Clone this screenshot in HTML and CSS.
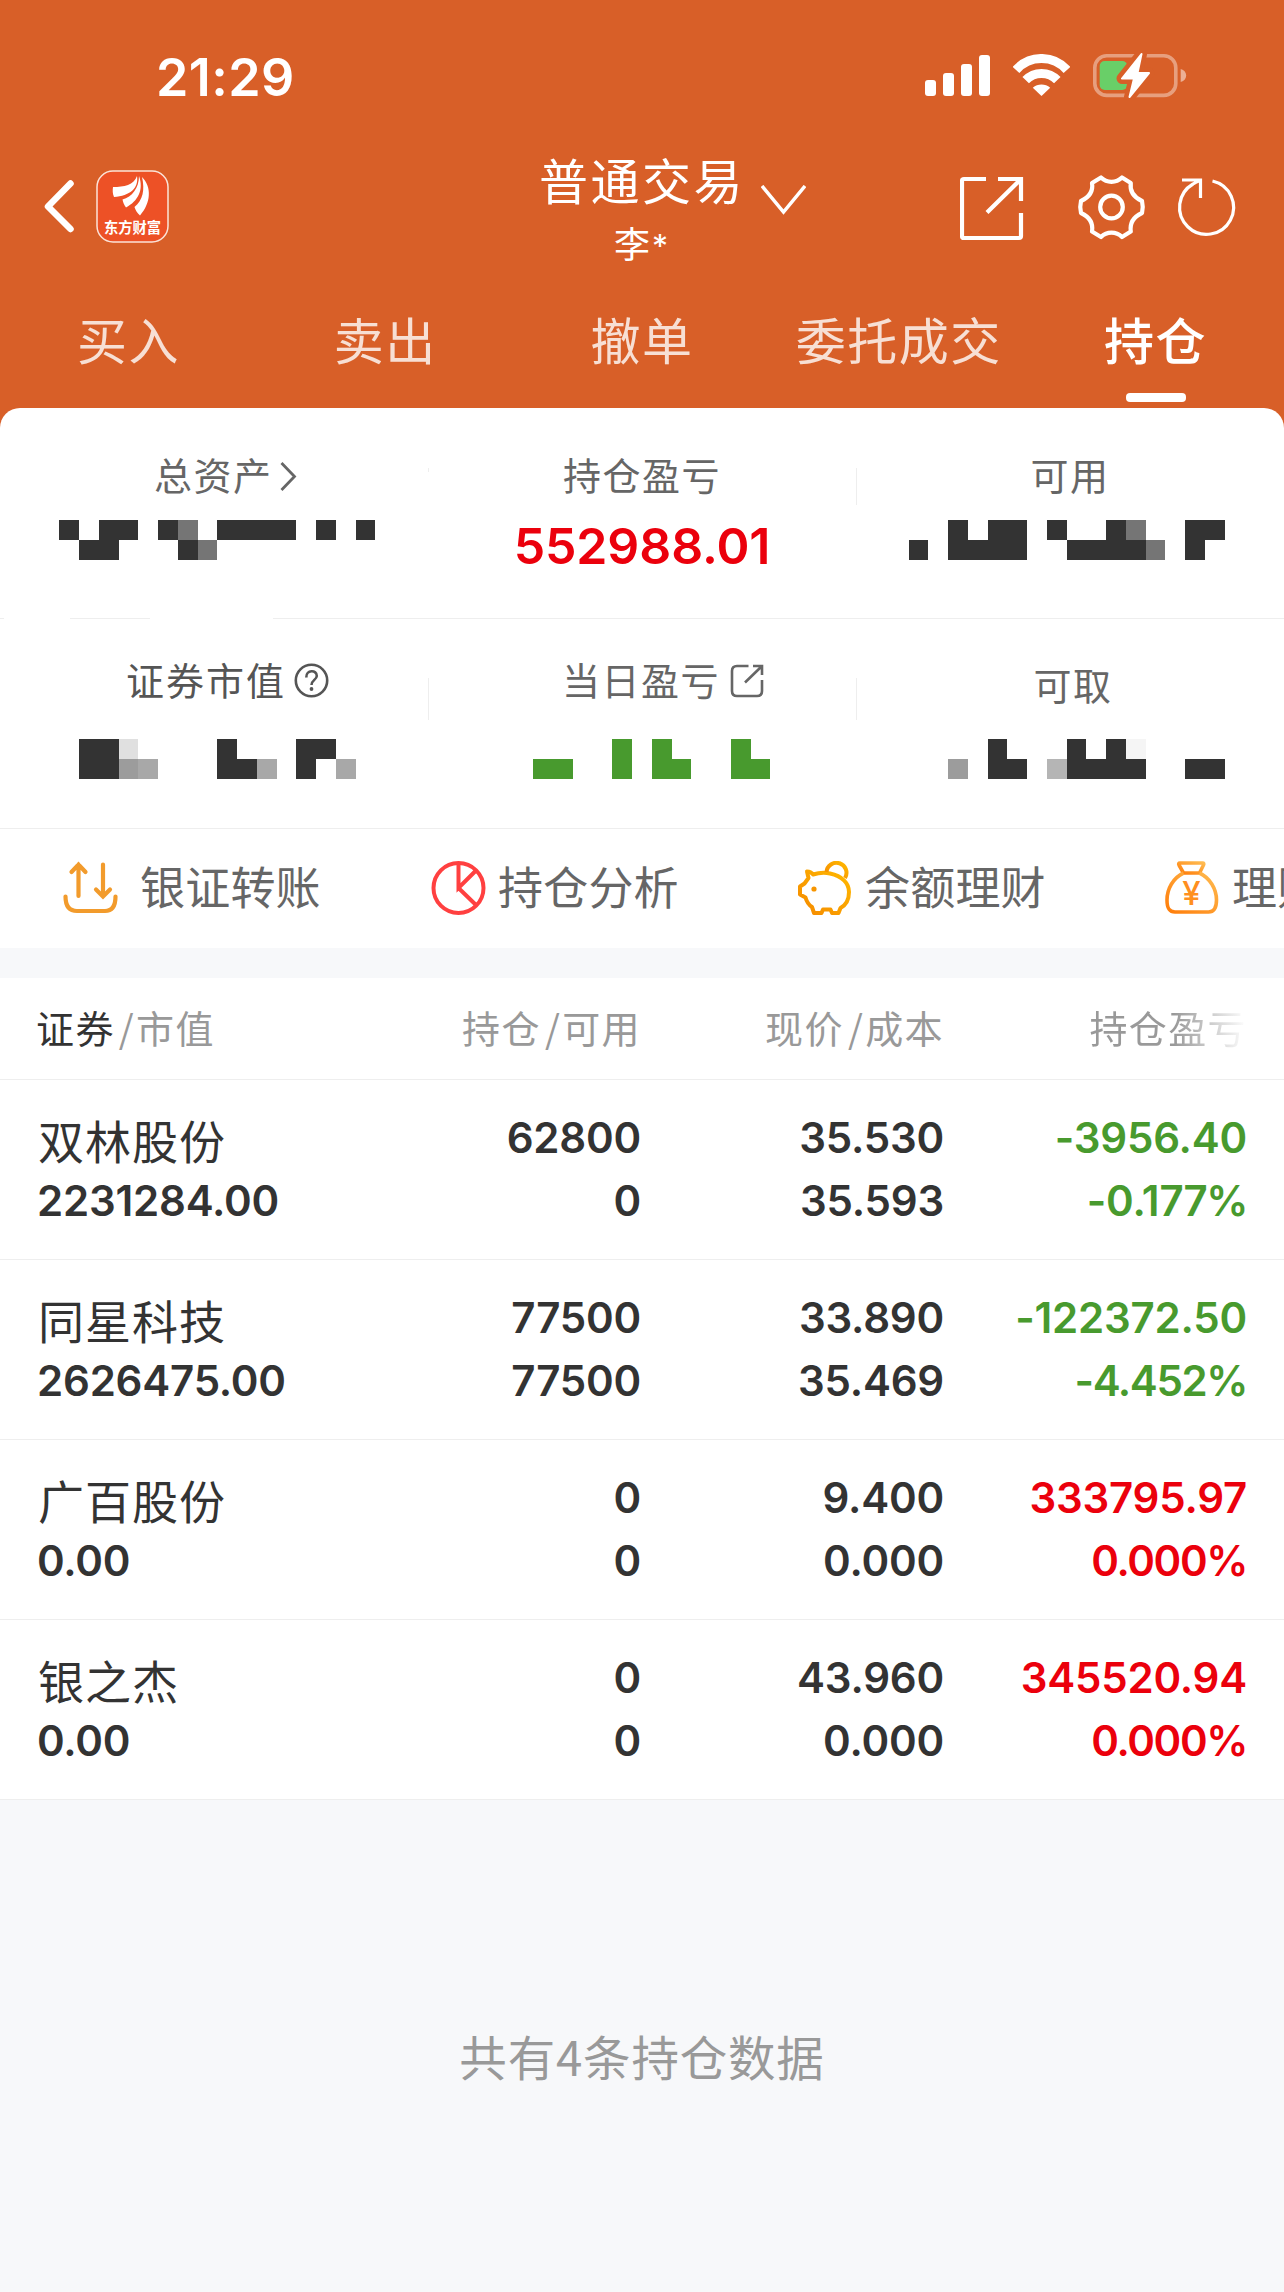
FILE: index.html
```html
<!DOCTYPE html>
<html lang="zh-CN">
<head>
    <meta charset="UTF-8">
    <meta name="viewport" content="width=device-width, initial-scale=1.0">
    <title>普通交易</title>
    <link rel="stylesheet" href="styles.css">
</head>
<body>
    <header class="header">
        <div class="status">
            <span class="time">21:29</span>
            <svg class="signal" width="65" height="42" viewBox="0 0 65 42" fill="#fff">
                <rect x="0" y="26" width="11" height="16" rx="3"/>
                <rect x="18" y="19" width="11" height="23" rx="3"/>
                <rect x="36" y="10" width="11" height="32" rx="3"/>
                <rect x="54" y="1" width="11" height="41" rx="3"/>
            </svg>
            <svg class="wifi" width="57" height="42" viewBox="0 0 57 42">
                <path d="M3 16A34 34 0 0 1 54 16M12.7 26.2A21.8 21.8 0 0 1 44.3 26.2" fill="none" stroke="#fff" stroke-width="9"/>
                <path d="M28.5 42L19.8 33.8A13.5 13.5 0 0 1 37.2 33.8Z" fill="#fff"/>
            </svg>
            <svg class="battery" width="94" height="46" viewBox="0 -1 94 46">
                <rect x="1.8" y="1.8" width="81" height="39.6" rx="12" fill="none" stroke="#fff" stroke-opacity=".4" stroke-width="3.6"/>
                <path d="M87.7 15C95 17 95 26 87.7 28Z" fill="#fff" fill-opacity=".5"/>
                <rect x="6.7" y="7" width="27.6" height="29" rx="5" fill="#69cf68"/>
                <path d="M48.5 0L29 24.5H41L36.5 43L56 19H44.5Z" fill="#d85f28" stroke="#d85f28" stroke-width="11" stroke-linejoin="round"/>
                <path d="M48.5 0L29 24.5H41L36.5 43L56 19H44.5Z" fill="#fff" stroke="#fff" stroke-width="2" stroke-linejoin="round"/>
            </svg>
        </div>

        <div class="navbar">
            <div class="nav-left">
                <svg width="30" height="54" viewBox="0 0 30 54" fill="none" stroke="#fff" stroke-width="6.5" stroke-linecap="round" stroke-linejoin="round">
                    <path d="M26.5 4.5L4 27.5L26.5 50"/>
                </svg>
                <svg class="logo" width="73" height="73" viewBox="0 0 73 73">
                    <rect x="1" y="1" width="71" height="71" rx="16" fill="#ed5126" stroke="#fbe3d8" stroke-width="1.5"/>
                    <path fill="#fff" d="M17 17C28 17 38 15 41 6C43 18 34 26 18 27C16.5 24 16.5 20 17 17Z"/>
                    <path fill="#fff" d="M43 6C48 20 42 31 30 37.5C28 35 27 32 26.5 29.5C36 27 43 18 43 6Z"/>
                    <path fill="#fff" d="M46 7C56 17 55 33 44 45.5C41 43 39.5 40 38.5 37C47 30 49 20 46 7Z"/>
                    <text class="logo-text" x="36.5" y="62.5" text-anchor="middle">东方财富</text>
                </svg>
            </div>
            <div class="nav-title">
                <div class="title">普通交易</div>
                <div class="user">李<span>*</span></div>
            </div>
            <div class="nav-right">
                <svg class="arrow-down" width="45" height="30" viewBox="0 0 45 30" fill="none" stroke="#fff" stroke-width="3.5">
                    <path d="M1 1L22.5 27L44 1"/>
                </svg>
                <svg width="64" height="72" viewBox="0 0 64 72" fill="none" stroke="#fff" stroke-width="4.2">
                    <path d="M26 9H4Q2 9 2 11V66Q2 68 4 68H59Q61 68 61 66V43M38 9H61V31M27 42.5L60.5 9.5"/>
                </svg>
                <svg class="gear" width="75" height="72" viewBox="0 0 75 72" fill="none" stroke="#fff" stroke-width="4.2" stroke-linejoin="round">
                    <path d="M27 7.5A15 15 0 0 0 48 7.5L56.8 13Q55 25 68 31Q69.5 37 68 43Q55 49 56.8 61.5L48 67A15 15 0 0 0 27 67L18 61.5Q20 49 7 43Q5.5 37 7 31Q20 25 18 13Z"/>
                    <circle cx="37.5" cy="37" r="11.3"/>
                </svg>
                <svg class="refresh" width="64" height="72" viewBox="0 0 64 72" fill="none" stroke="#fff" stroke-width="3.2">
                    <path d="M37.5 11A27 27 0 1 1 18 14Q21 12 25 10.5M7 10H25.5V28"/>
                </svg>
            </div>
        </div>

        <nav class="tabs">
            <a>买入</a>
            <a>卖出</a>
            <a>撤单</a>
            <a>委托成交</a>
            <a class="active">持仓</a>
        </nav>
    </header>

    <main>
        <section class="summary">
            <div class="summary-row first">
                <div class="cell total">
                    <div class="label">总资产
                        <svg width="17" height="30" viewBox="0 0 17 30" fill="none" stroke="#666" stroke-width="2.8"><path d="M1.5 2L14.5 15.5L1.5 29"/></svg>
                    </div>
                    <svg class="mask" width="428" height="40" viewBox="0 0 428 40" fill="#333" shape-rendering="crispEdges">
                        <path d="M59 0h20v20h-20zM99 0h39v20h-39zM158 0h20v20h-20zM217 0h79v20h-79zM316 0h20v20h-20zM356 0h19v20h-19zM79 20h40v20h-40zM178 20h20v20h-20z"/>
                        <path fill="#757575" d="M178 0h20v20h-20zM198 20h19v20h-19z"/>
                    </svg>
                </div>
                <div class="cell">
                    <div class="label">持仓盈亏</div>
                    <div class="value red">552988.01</div>
                </div>
                <div class="cell avail">
                    <div class="label">可用</div>
                    <svg class="mask" width="428" height="40" viewBox="856 0 428 40" fill="#333" shape-rendering="crispEdges">
                        <path d="M948 0h20v20h-20zM988 0h39v20h-39zM1047 0h20v20h-20zM1106 0h20v20h-20zM1185 0h40v20h-40zM909 20h19v20h-19zM948 20h79v20h-79zM1067 20h79v20h-79zM1185 20h20v20h-20z"/>
                        <path fill="#757575" d="M1126 0h20v20h-20zM1146 20h19v20h-19z"/>
                    </svg>
                </div>
            </div>
            <div class="split"></div>
            <div class="summary-row second">
                <div class="cell market">
                    <div class="label">证券市值
                        <svg width="35" height="35" viewBox="0 0 35 35" fill="none" stroke="#555" stroke-width="2.6">
                            <circle cx="17.5" cy="17.5" r="15.7"/>
                            <path d="M12.3 14.5C12 6.5 23 6.5 22.8 13C22.5 17 17.5 17 17.5 22"/>
                            <circle cx="17.5" cy="26" r="1.9" fill="#555" stroke="none"/>
                        </svg>
                    </div>
                    <svg class="mask" width="428" height="40" viewBox="0 0 428 40" fill="#333" shape-rendering="crispEdges">
                        <path d="M79 0h40v40h-40zM217 0h20v20h-20zM296 0h40v20h-40zM217 20h40v20h-40zM296 20h20v20h-20z"/>
                        <path fill="#e0e0e0" d="M119 0h19v20h-19z"/>
                        <path fill="#9c9c9c" d="M119 20h19v20h-19z"/>
                        <path fill="#a8a8a8" d="M138 20h20v20h-20zM257 20h20v20h-20zM336 20h20v20h-20z"/>
                    </svg>
                </div>
                <div class="cell today">
                    <div class="label">当日盈亏
                        <svg width="34" height="34" viewBox="0 0 34 34" fill="none" stroke="#666" stroke-width="2.6">
                            <path d="M18.5 2H7Q2 2 2 7V27Q2 32 7 32H27Q32 32 32 27V16M23 2H32V11M15 18.5L31.5 2.5"/>
                        </svg>
                    </div>
                    <svg class="mask" width="428" height="40" viewBox="428 0 428 40" fill="#489a2e" shape-rendering="crispEdges">
                        <path d="M612 0h20v40h-20zM652 0h20v20h-20zM731 0h20v20h-20zM533 20h40v20h-40zM652 20h39v20h-39zM731 20h39v20h-39z"/>
                    </svg>
                </div>
                <div class="cell cash">
                    <div class="label">可取</div>
                    <svg class="mask" width="428" height="40" viewBox="856 0 428 40" fill="#333" shape-rendering="crispEdges">
                        <path d="M988 0h19v20h-19zM1067 0h19v20h-19zM1106 0h20v20h-20zM988 20h39v20h-39zM1067 20h79v20h-79zM1185 20h40v20h-40z"/>
                        <path fill="#f5f5f5" d="M1126 0h20v20h-20z"/>
                        <path fill="#9c9c9c" d="M948 20h20v20h-20z"/>
                        <path fill="#b5b5b5" d="M1047 20h20v20h-20z"/>
                    </svg>
                </div>
            </div>
        </section>

        <section class="actions">
            <a class="action transfer">
                <svg width="55" height="55" viewBox="0 0 55 55" fill="none" stroke="#f29b2c" stroke-width="4.2" stroke-linecap="round">
                    <path d="M15.5 35V3.5M8.5 11L15.5 3.5L22.5 11M40 3.5V35M33 28.5L40 35.5L47 28.5"/>
                    <path d="M2.5 35.5C2.5 45 6 50 14 50H42C49 50 52.5 45 52.5 35.5"/>
                </svg>
                <span>银证转账</span>
            </a>
            <a class="action">
                <svg width="55" height="55" viewBox="0 0 55 55" fill="none" stroke="#ff4040" stroke-width="4">
                    <circle cx="27.5" cy="27" r="25"/>
                    <path d="M27.5 2V27L45 9.5M27.5 27L45 44"/>
                </svg>
                <span>持仓分析</span>
            </a>
            <a class="action">
                <svg width="55" height="55" viewBox="0 0 55 55" fill="none" stroke="url(#pig)" stroke-width="4" stroke-linejoin="round">
                    <defs>
                        <linearGradient id="pig" x1="0" y1="1" x2="1" y2="0"><stop offset="0" stop-color="#f58a00"/><stop offset="1" stop-color="#ffb800"/></linearGradient>
                    </defs>
                    <path d="M9 10.5Q13 10.5 15 13.5C20 12 27 11.5 32 12.5C44 15 51 22 51 31C51 38 48 44 42.5 47L40.5 52H34L32.5 48.5H25L23.5 52H16L14 46C10 43.5 8.5 40 7.5 36.5L2 33.5V25.5L6.5 22.5L10.5 17Z"/>
                    <path d="M28.5 11A10 10 0 1 1 47 17"/>
                    <circle cx="16" cy="28" r="2.6" fill="#f79500" stroke="none"/>
                </svg>
                <span>余额理财</span>
            </a>
            <a class="action">
                <svg width="55" height="55" viewBox="0 0 55 55" fill="none" stroke="url(#bag)" stroke-width="3.6" stroke-linejoin="round">
                    <defs>
                        <linearGradient id="bag" x1="0" y1="1" x2="1" y2="0"><stop offset="0" stop-color="#ff7d0a"/><stop offset="1" stop-color="#ffbb50"/></linearGradient>
                    </defs>
                    <path d="M18.5 12L14 4Q13 2 15 2H37.5Q39.5 2 38.5 4L34.5 12Z"/>
                    <path d="M18.5 12C8 17 2 28 2 39C2 47 4 51 10 51H43.5C49 51 51.5 47 51.5 39C51.5 28 45 17 34.5 12"/>
                    <text class="yen" x="26.5" y="44" text-anchor="middle">¥</text>
                </svg>
                <span>理财</span>
            </a>
        </section>

        <section class="holdings">
            <div class="row head">
                <div><b>证券</b><i>/</i>市值</div>
                <div>持仓<i>/</i>可用</div>
                <div>现价<i>/</i>成本</div>
                <div class="fade">持仓盈亏</div>
            </div>
            <div class="row">
                <div><p class="name">双林股份</p><p>2231284.00</p></div>
                <div><p>62800</p><p>0</p></div>
                <div><p>35.530</p><p>35.593</p></div>
                <div class="green"><p>-3956.40</p><p>-0.17<span class="rate">7%</span></p></div>
            </div>
            <div class="row">
                <div><p class="name">同星科技</p><p>2626475.00</p></div>
                <div><p>77500</p><p>77500</p></div>
                <div><p>33.890</p><p>35.469</p></div>
                <div class="green"><p>-122372.50</p><p class="rate">-4.452%</p></div>
            </div>
            <div class="row">
                <div><p class="name">广百股份</p><p>0.00</p></div>
                <div><p>0</p><p>0</p></div>
                <div><p>9.400</p><p>0.000</p></div>
                <div class="red"><p>333795.97</p><p class="rate">0.000%</p></div>
            </div>
            <div class="row">
                <div><p class="name">银之杰</p><p>0.00</p></div>
                <div><p>0</p><p>0</p></div>
                <div><p>43.960</p><p>0.000</p></div>
                <div class="red"><p>345520.94</p><p class="rate">0.000%</p></div>
            </div>
        </section>
    </main>

    <footer class="footer">共有4条持仓数据</footer>
</body>
</html>
```

FILE: styles.css
```css
* { box-sizing: border-box; }
body { margin: 0; width: 1284px; min-height: 2292px; background: #f7f8fa; color: #333; font-family: "Noto Sans CJK SC", sans-serif; overflow-x: hidden; }
p { margin: 0; }
svg { display: block; flex: none; }

.red { color: #eb000c; }
.green { color: #489a2e; }

/* header */
.header { height: 428px; background: #d85f28; color: #fff; }
.status { display: flex; height: 108px; padding: 54px 0 0 156px; }
.time { width: 769px; font: 600 52px/48px Inter, sans-serif; letter-spacing: .4px; }
.wifi { margin-left: 23px; }
.battery { margin: -1px 0 0 23px; }

.navbar { display: grid; grid-template-columns: 539px 202px 1fr; height: 196px; }
.nav-left { display: flex; align-items: center; gap: 22px; padding-left: 44px; }
.logo-text { font-size: 14.3px; font-weight: 700; fill: #fff; }
.nav-title { padding-top: 40px; text-align: center; white-space: nowrap; }
.title { font-size: 49px; line-height: 61px; letter-spacing: 2.5px; margin-right: -2.5px; }
.user { padding-left: 4px; font-size: 36px; line-height: 66px; letter-spacing: 2px; }
.user span { font-family: Inter, sans-serif; font-size: 32px; }
.nav-right { display: flex; align-items: center; padding-left: 20px; }
.arrow-down { margin: -12px 154px 0 0; }
.gear { margin-left: 50px; }
.refresh { margin-left: 26px; }

.tabs { display: grid; grid-template-columns: repeat(5, 1fr); height: 104px; text-align: center; font-size: 50px; letter-spacing: 1.5px; line-height: 68px; }
.tabs a { display: flex; flex-direction: column; align-items: center; color: rgba(255, 255, 255, .8); }
.tabs .active { color: #fff; font-weight: 500; }
.tabs .active::after { content: ""; width: 60px; height: 9px; margin: 21px 0 0 1px; border-radius: 4px; background: #fff; }

/* asset summary */
.summary { margin-top: -20px; height: 421px; background: #fff; border-radius: 20px 20px 0 0; border-bottom: 1px solid #eee; }
.summary-row { display: grid; grid-template-columns: repeat(3, 428px); }
.first { height: 210px; padding-top: 35px; }
.second { height: 209px; padding-top: 29px; }
.split { height: 1px; background: linear-gradient(to right, #eee 4px, transparent 4px, transparent 70px, #eee 70px, #eee 150px, transparent 150px, transparent 273px, #eee 273px); }
.label { display: flex; align-items: center; justify-content: center; height: 60px; font-size: 38px; letter-spacing: 1.5px; color: #666; }
.label svg { margin-top: 5px; }
.mask { margin-top: 17px; }
.second .mask { margin-top: 31px; }
.value { text-align: center; font: 600 50px/60px Inter, sans-serif; letter-spacing: -.1px; margin-top: 13px; }
.total .label { justify-content: flex-start; padding-left: 154px; gap: 7px; }
.market .label { justify-content: flex-start; padding-left: 126px; gap: 8px; letter-spacing: 2px; color: #555; }
.today .label { justify-content: flex-start; padding-left: 134px; gap: 10px; }
.cash .label { padding: 11px 0 0 6px; }
.cell + .cell { background: linear-gradient(#eee, #eee) no-repeat 0 30px / 1px 42px; }
.first .cell + .cell { background-size: 1px 4px; background-position: 0 25px; }
.first .avail { background-size: 1px 37px !important; }

/* shortcuts */
.actions { display: grid; grid-template-columns: repeat(4, 367px); width: 1284px; height: 119px; padding-left: 63px; background: #fff; overflow: hidden; }
.action { display: flex; align-items: center; gap: 12px; padding: 0 0 1px 1px; font-size: 45px; letter-spacing: .2px; line-height: 60px; color: #666; white-space: nowrap; }
.action span { margin-top: -4px; }
.transfer { gap: 22px; padding-left: 0; }
.yen { font: 500 33px Inter, sans-serif; fill: #ff8f1f; stroke: none; }

/* holdings table */
.holdings { margin-top: 30px; background: #fff; }
.row { display: grid; grid-template-columns: 302px repeat(3, 303px); height: 180px; padding: 26px 36px 0; border-bottom: 1px solid #eee; text-align: right; font: 600 42px/63px Inter, sans-serif; letter-spacing: -.2px; }
.row > :first-child { text-align: left; padding-left: 1px; }
.row .rate { letter-spacing: -1.4px; }
.row .name { height: 63px; padding-left: 1px; font: 400 46px/66px "Noto Sans CJK SC", sans-serif; letter-spacing: 1px; }
.head { height: 102px; padding-top: 19px; font: 400 38px/60px "Noto Sans CJK SC", sans-serif; letter-spacing: 1.4px; color: #999; }
.head > :first-child { padding-left: 0; }
.head b { font-weight: 400; color: #333; }
.head i { font-style: normal; padding: 0 1px 0 4px; }
.fade { background: linear-gradient(to right, #999 230px, #fff 303px); -webkit-background-clip: text; background-clip: text; color: transparent; }

.footer { padding-top: 222px; text-align: center; font-size: 47.5px; line-height: 68px; letter-spacing: .8px; color: #999; }
```
